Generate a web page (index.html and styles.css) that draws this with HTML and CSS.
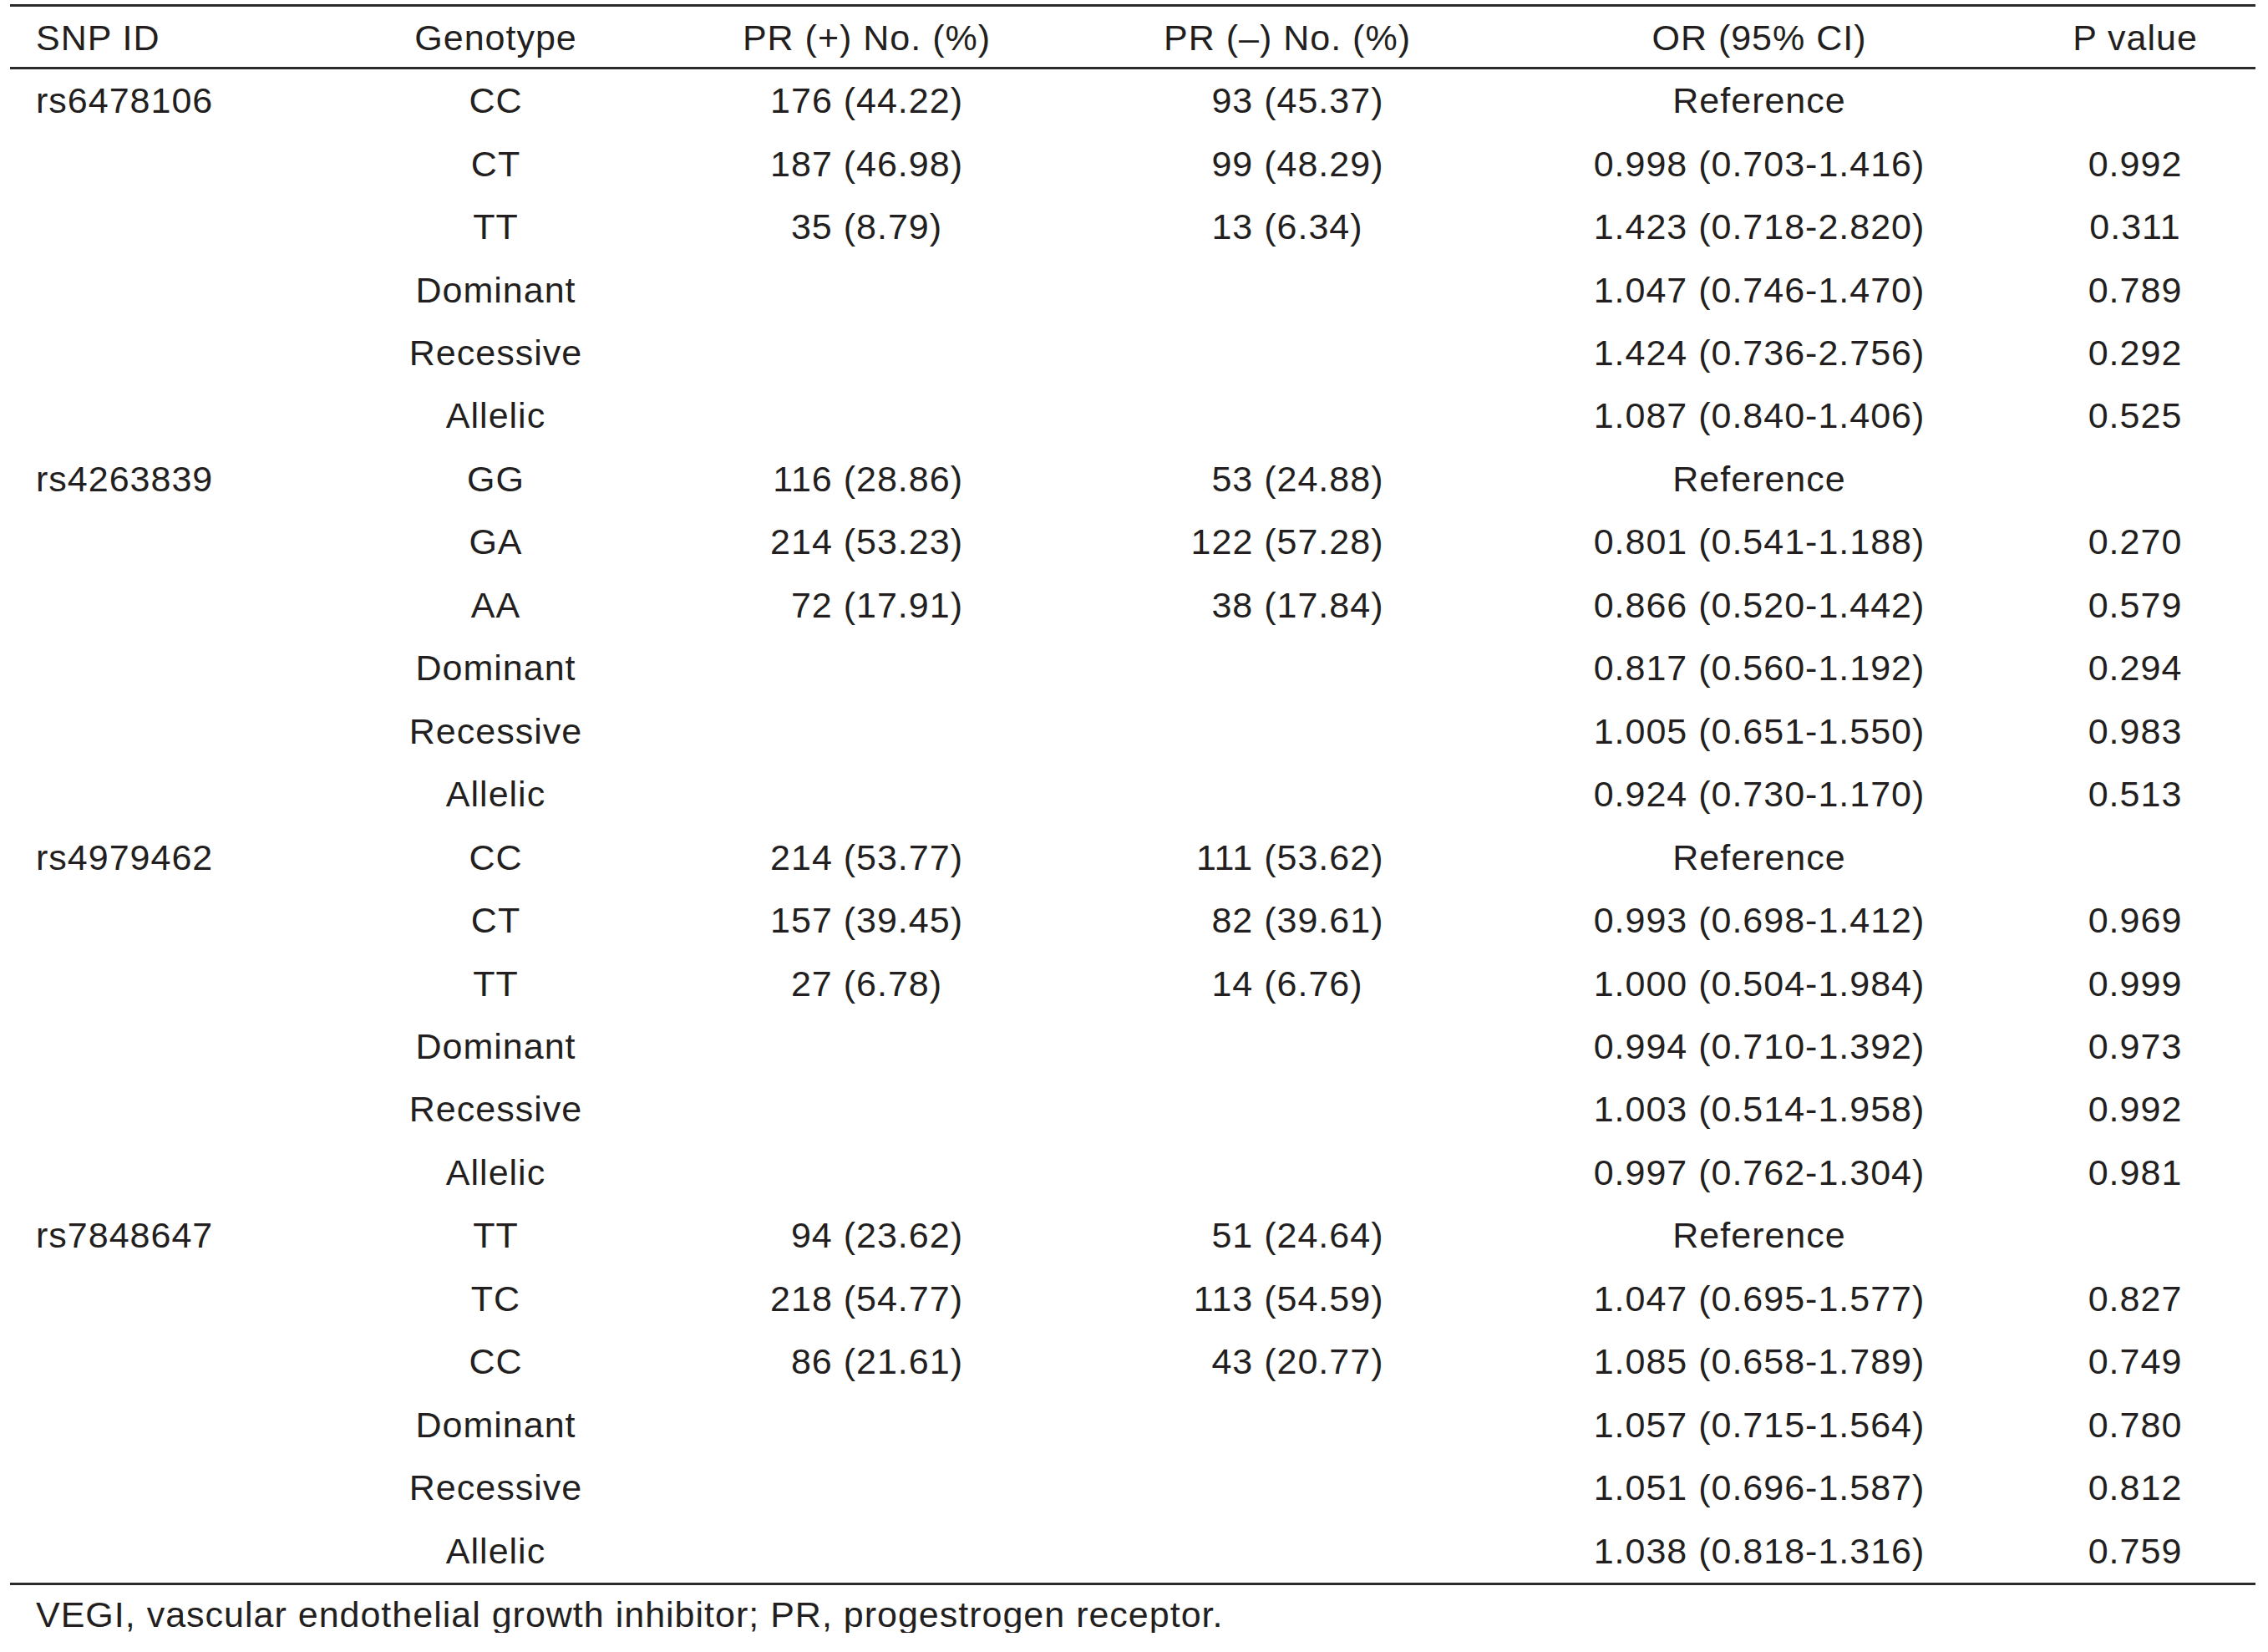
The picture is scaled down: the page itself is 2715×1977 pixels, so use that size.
FILE: index.html
```html
<!DOCTYPE html>
<html lang="en">
<head>
<meta charset="utf-8">
<title>Table</title>
<link rel="stylesheet" href="styles.css">
</head>
<body>
<div class="page">
  <div class="table">
    <div class="row head">
      <div class="cell snp">SNP ID</div>
      <div class="cell">Genotype</div>
      <div class="cell">PR (+) No. (%)</div>
      <div class="cell neg">PR (–) No. (%)</div>
      <div class="cell">OR (95% CI)</div>
      <div class="cell">P value</div>
    </div>
    <div class="body">
      <div class="row"><div class="cell snp">rs6478106</div><div class="cell">CC</div><div class="cell"><span class="n">176</span> <span class="p">(44.22)</span></div><div class="cell neg"><span class="n">93</span> <span class="p">(45.37)</span></div><div class="cell">Reference</div><div class="cell"></div></div>
      <div class="row"><div class="cell snp"></div><div class="cell">CT</div><div class="cell"><span class="n">187</span> <span class="p">(46.98)</span></div><div class="cell neg"><span class="n">99</span> <span class="p">(48.29)</span></div><div class="cell">0.998 (0.703-1.416)</div><div class="cell">0.992</div></div>
      <div class="row"><div class="cell snp"></div><div class="cell">TT</div><div class="cell"><span class="n">35</span> <span class="p">(8.79)</span></div><div class="cell neg"><span class="n">13</span> <span class="p">(6.34)</span></div><div class="cell">1.423 (0.718-2.820)</div><div class="cell">0.311</div></div>
      <div class="row"><div class="cell snp"></div><div class="cell">Dominant</div><div class="cell"></div><div class="cell neg"></div><div class="cell">1.047 (0.746-1.470)</div><div class="cell">0.789</div></div>
      <div class="row"><div class="cell snp"></div><div class="cell">Recessive</div><div class="cell"></div><div class="cell neg"></div><div class="cell">1.424 (0.736-2.756)</div><div class="cell">0.292</div></div>
      <div class="row"><div class="cell snp"></div><div class="cell">Allelic</div><div class="cell"></div><div class="cell neg"></div><div class="cell">1.087 (0.840-1.406)</div><div class="cell">0.525</div></div>

      <div class="row"><div class="cell snp">rs4263839</div><div class="cell">GG</div><div class="cell"><span class="n">116</span> <span class="p">(28.86)</span></div><div class="cell neg"><span class="n">53</span> <span class="p">(24.88)</span></div><div class="cell">Reference</div><div class="cell"></div></div>
      <div class="row"><div class="cell snp"></div><div class="cell">GA</div><div class="cell"><span class="n">214</span> <span class="p">(53.23)</span></div><div class="cell neg"><span class="n">122</span> <span class="p">(57.28)</span></div><div class="cell">0.801 (0.541-1.188)</div><div class="cell">0.270</div></div>
      <div class="row"><div class="cell snp"></div><div class="cell">AA</div><div class="cell"><span class="n">72</span> <span class="p">(17.91)</span></div><div class="cell neg"><span class="n">38</span> <span class="p">(17.84)</span></div><div class="cell">0.866 (0.520-1.442)</div><div class="cell">0.579</div></div>
      <div class="row"><div class="cell snp"></div><div class="cell">Dominant</div><div class="cell"></div><div class="cell neg"></div><div class="cell">0.817 (0.560-1.192)</div><div class="cell">0.294</div></div>
      <div class="row"><div class="cell snp"></div><div class="cell">Recessive</div><div class="cell"></div><div class="cell neg"></div><div class="cell">1.005 (0.651-1.550)</div><div class="cell">0.983</div></div>
      <div class="row"><div class="cell snp"></div><div class="cell">Allelic</div><div class="cell"></div><div class="cell neg"></div><div class="cell">0.924 (0.730-1.170)</div><div class="cell">0.513</div></div>

      <div class="row"><div class="cell snp">rs4979462</div><div class="cell">CC</div><div class="cell"><span class="n">214</span> <span class="p">(53.77)</span></div><div class="cell neg"><span class="n">111</span> <span class="p">(53.62)</span></div><div class="cell">Reference</div><div class="cell"></div></div>
      <div class="row"><div class="cell snp"></div><div class="cell">CT</div><div class="cell"><span class="n">157</span> <span class="p">(39.45)</span></div><div class="cell neg"><span class="n">82</span> <span class="p">(39.61)</span></div><div class="cell">0.993 (0.698-1.412)</div><div class="cell">0.969</div></div>
      <div class="row"><div class="cell snp"></div><div class="cell">TT</div><div class="cell"><span class="n">27</span> <span class="p">(6.78)</span></div><div class="cell neg"><span class="n">14</span> <span class="p">(6.76)</span></div><div class="cell">1.000 (0.504-1.984)</div><div class="cell">0.999</div></div>
      <div class="row"><div class="cell snp"></div><div class="cell">Dominant</div><div class="cell"></div><div class="cell neg"></div><div class="cell">0.994 (0.710-1.392)</div><div class="cell">0.973</div></div>
      <div class="row"><div class="cell snp"></div><div class="cell">Recessive</div><div class="cell"></div><div class="cell neg"></div><div class="cell">1.003 (0.514-1.958)</div><div class="cell">0.992</div></div>
      <div class="row"><div class="cell snp"></div><div class="cell">Allelic</div><div class="cell"></div><div class="cell neg"></div><div class="cell">0.997 (0.762-1.304)</div><div class="cell">0.981</div></div>

      <div class="row"><div class="cell snp">rs7848647</div><div class="cell">TT</div><div class="cell"><span class="n">94</span> <span class="p">(23.62)</span></div><div class="cell neg"><span class="n">51</span> <span class="p">(24.64)</span></div><div class="cell">Reference</div><div class="cell"></div></div>
      <div class="row"><div class="cell snp"></div><div class="cell">TC</div><div class="cell"><span class="n">218</span> <span class="p">(54.77)</span></div><div class="cell neg"><span class="n">113</span> <span class="p">(54.59)</span></div><div class="cell">1.047 (0.695-1.577)</div><div class="cell">0.827</div></div>
      <div class="row"><div class="cell snp"></div><div class="cell">CC</div><div class="cell"><span class="n">86</span> <span class="p">(21.61)</span></div><div class="cell neg"><span class="n">43</span> <span class="p">(20.77)</span></div><div class="cell">1.085 (0.658-1.789)</div><div class="cell">0.749</div></div>
      <div class="row"><div class="cell snp"></div><div class="cell">Dominant</div><div class="cell"></div><div class="cell neg"></div><div class="cell">1.057 (0.715-1.564)</div><div class="cell">0.780</div></div>
      <div class="row"><div class="cell snp"></div><div class="cell">Recessive</div><div class="cell"></div><div class="cell neg"></div><div class="cell">1.051 (0.696-1.587)</div><div class="cell">0.812</div></div>
      <div class="row"><div class="cell snp"></div><div class="cell">Allelic</div><div class="cell"></div><div class="cell neg"></div><div class="cell">1.038 (0.818-1.316)</div><div class="cell">0.759</div></div>
    </div>
  </div>
  <p class="note">VEGI, vascular endothelial growth inhibitor; PR, progestrogen receptor.</p>
</div>
</body>
</html>
```
FILE: styles.css
```css
html, body {
  margin: 0;
  padding: 0;
  background: #ffffff;
}

body {
  font-family: "Liberation Sans", Arial, Helvetica, sans-serif;
  font-size: 43px;
  letter-spacing: 1px;
  color: #231f20;
}

.page {
  padding: 5px 0 0 12px;
  width: 2688px;
}

.table {
  width: 2688px;
  border-top: 3px solid #2b2b2b;
  border-bottom: 3px solid #2b2b2b;
}

.row {
  display: grid;
  grid-template-columns: 394px 375px 513px 506px 612px 288px;
  height: 75.46px;
  align-items: center;
}

.row.head {
  height: auto;
  padding: 16px 0 13px;
  border-bottom: 3px solid #2b2b2b;
}

.cell {
  line-height: 43px;
  text-align: center;
  white-space: nowrap;
}

.cell.snp {
  text-align: left;
  padding-left: 31px;
}

.cell.neg {
  padding-right: 12px;
}

.n {
  display: inline-block;
  width: calc(1.668em + 3px);
  text-align: right;
}

.p {
  display: inline-block;
  width: calc(3.168em + 7px);
  text-align: left;
}

.note {
  margin: 0;
  padding: 14px 0 0 31px;
  line-height: 43px;
}
```
